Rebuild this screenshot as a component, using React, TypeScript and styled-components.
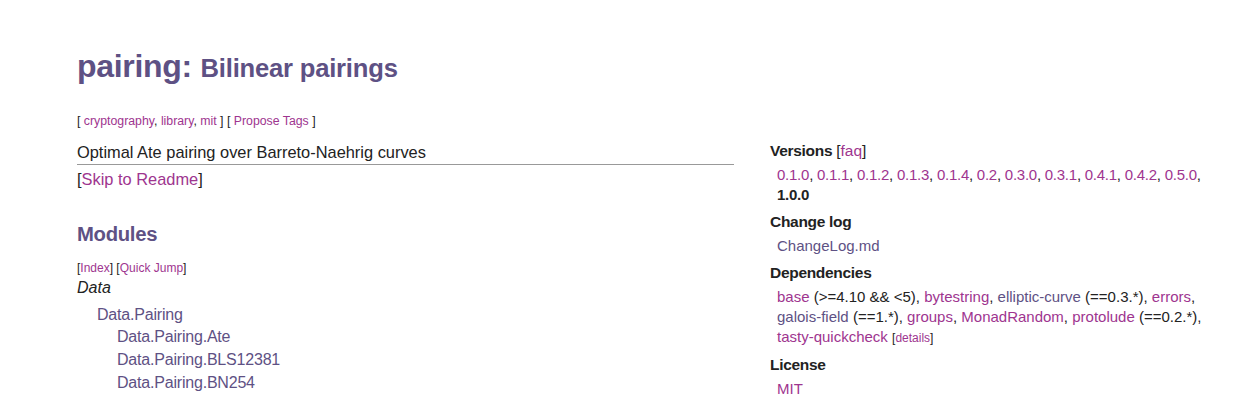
import React from "react";
import styled, { createGlobalStyle } from "styled-components";

const Global = createGlobalStyle`
  html, body { margin: 0; padding: 0; background: #fff; }
  body { font-family: "Liberation Sans", Arial, sans-serif; color: #222; }
`;

const PURPLE = "#5e5184";
const MAGENTA = "#9e358f";

const Page = styled.div`
  padding: 42px 0 0 77px;
  width: 1173px;
  box-sizing: border-box;
`;

const Title = styled.h1`
  margin: 0;
  font-size: 32px;
  line-height: 48px;
  font-weight: bold;
  color: ${PURPLE};
  letter-spacing: -0.3px;
`;

const Sub = styled.span`
  font-size: 25.6px;
  letter-spacing: -0.2px;
`;

const Tags = styled.div`
  margin-top: 21px;
  font-size: 12.3px;
  line-height: 16px;
  color: #222;
`;

const A = styled.a<{ $v?: boolean }>`
  color: ${(p) => (p.$v ? MAGENTA : PURPLE)};
  text-decoration: none;
`;

const Columns = styled.div`
  display: flex;
  gap: 36px;
  margin-top: 11px;
`;

const Left = styled.div`
  flex: 0 0 657px;
  padding-top: 1px;
`;

const Right = styled.div`
  flex: 0 0 440px;
`;

const Desc = styled.div`
  font-size: 16.4px;
  line-height: 22px;
  border-bottom: 1px solid #999;
  padding-bottom: 1px;
  color: #222;
`;

const Skip = styled.div`
  font-size: 16.4px;
  line-height: 28px;
`;

const H2 = styled.h2`
  margin: 26px 0 0;
  font-size: 20.3px;
  line-height: 30px;
  color: ${PURPLE};
  font-weight: bold;
  letter-spacing: -0.3px;
`;

const SmallLinks = styled.div`
  margin-top: 11px;
  font-size: 12px;
  line-height: 17px;
`;

const Cat = styled.div`
  font-style: italic;
  font-size: 16px;
  line-height: 22px;
`;

const ModList = styled.div`
  margin-top: 5px;
`;

const Mod = styled.div<{ $lvl: number }>`
  padding-left: ${(p) => p.$lvl * 20}px;
  font-size: 16px;
  line-height: ${(p) => (p.$lvl === 1 ? "21px" : "23px")};
  letter-spacing: -0.2px;
`;

const PropHead = styled.div`
  font-weight: bold;
  font-size: 15.5px;
  line-height: 22px;
  color: #222;
  letter-spacing: -0.3px;
`;

const PropBody = styled.div<{ $tight?: boolean }>`
  padding: 3px 0 0 7px;
  font-size: 15px;
  line-height: 20px;
  margin-bottom: 6px;
  letter-spacing: ${(p) => (p.$tight ? "-0.25px" : "0")};
`;

const Normal = styled.span`
  font-weight: normal;
  letter-spacing: 0;
`;

const Strong = styled.strong`
  font-weight: bold;
`;

const Tiny = styled.span`
  font-size: 12px;
`;

const versions = ["0.1.0", "0.1.1", "0.1.2", "0.1.3", "0.1.4", "0.2", "0.3.0", "0.3.1", "0.4.1", "0.4.2", "0.5.0"];

export default function App() {
  return (
    <>
      <Global />
      <Page>
        <Title>
          pairing: <Sub>Bilinear pairings</Sub>
        </Title>
        <Tags>
          [ <A $v href="#">cryptography</A>, <A $v href="#">library</A>, <A $v href="#">mit</A> ] [{" "}
          <A $v href="#">Propose Tags</A> ]
        </Tags>
        <Columns>
          <Left>
            <Desc>Optimal Ate pairing over Barreto-Naehrig curves</Desc>
            <Skip>
              [<A $v href="#">Skip to Readme</A>]
            </Skip>
            <H2>Modules</H2>
            <SmallLinks>
              [<A $v href="#">Index</A>] [<A $v href="#">Quick Jump</A>]
            </SmallLinks>
            <Cat>Data</Cat>
            <ModList>
              <Mod $lvl={1}><A href="#">Data.Pairing</A></Mod>
              <Mod $lvl={2}><A href="#">Data.Pairing.Ate</A></Mod>
              <Mod $lvl={2}><A href="#">Data.Pairing.BLS12381</A></Mod>
              <Mod $lvl={2}><A href="#">Data.Pairing.BN254</A></Mod>
            </ModList>
          </Left>
          <Right>
            <PropHead>
              Versions <Normal>[<A $v href="#">faq</A>]</Normal>
            </PropHead>
            <PropBody $tight>
              {versions.map((v) => (
                <React.Fragment key={v}>
                  <A $v href="#">{v}</A>,{" "}
                </React.Fragment>
              ))}
              <Strong>1.0.0</Strong>
            </PropBody>
            <PropHead>Change log</PropHead>
            <PropBody>
              <A href="#">ChangeLog.md</A>
            </PropBody>
            <PropHead>Dependencies</PropHead>
            <PropBody>
              <A $v href="#">base</A> (&gt;=4.10 &amp;&amp; &lt;5), <A $v href="#">bytestring</A>,{" "}
              <A href="#">elliptic-curve</A> (==0.3.*), <A $v href="#">errors</A>,{" "}
              <A href="#">galois-field</A> (==1.*), <A $v href="#">groups</A>, <A $v href="#">MonadRandom</A>,{" "}
              <A $v href="#">protolude</A> (==0.2.*), <A $v href="#">tasty-quickcheck</A>{" "}
              <Tiny>[<A $v href="#">details</A>]</Tiny>
            </PropBody>
            <PropHead>License</PropHead>
            <PropBody>
              <A $v href="#">MIT</A>
            </PropBody>
          </Right>
        </Columns>
      </Page>
    </>
  );
}
